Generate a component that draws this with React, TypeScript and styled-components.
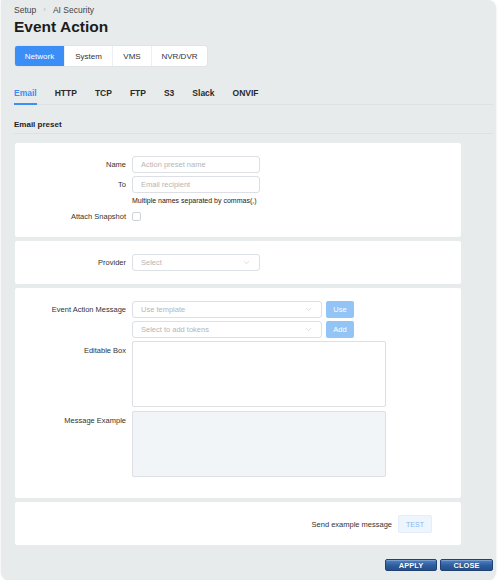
import styled, { createGlobalStyle } from "styled-components";
import { ChevronDown } from "lucide-react";

const GlobalStyle = createGlobalStyle`
  html, body {
    margin: 0;
    padding: 0;
    background: #ffffff;
    font-family: "Liberation Sans", Arial, sans-serif;
  }
`;

const Panel = styled.div`
  width: 495px;
  height: 580px;
  margin-left: 1px;
  background: #e8ebeb;
  border-radius: 0 8px 9px 9px;
  box-shadow: 0 1px 2px rgba(0, 0, 0, 0.12);
  display: flex;
  flex-direction: column;
  padding: 5px 3px 0 13px;
  box-sizing: border-box;
`;

const Breadcrumb = styled.div`
  display: flex;
  align-items: center;
  gap: 7px;
  font-size: 8.5px;
  line-height: 10px;
  color: #444;
`;

const Sep = styled.span`
  color: #b5b9bc;
  font-size: 8px;
`;

const Title = styled.h1`
  margin: 2px 0 0;
  font-size: 15.5px;
  line-height: 19px;
  font-weight: bold;
  color: #1c1c1c;
`;

const Segmented = styled.div`
  display: flex;
  align-self: flex-start;
  margin-top: 9px;
  height: 22px;
  background: #fff;
  border: 1px solid #e0e4e6;
  border-radius: 3px;
  box-sizing: border-box;
  overflow: hidden;
`;

const Segment = styled.div<{ $active?: boolean; $w: number }>`
  width: ${(p) => p.$w}px;
  display: flex;
  align-items: center;
  justify-content: center;
  font-size: 8px;
  color: ${(p) => (p.$active ? "#fff" : "#333")};
  background: ${(p) => (p.$active ? "#3b8ef5" : "transparent")};
  border-right: 1px solid #eceff1;
  &:last-child {
    border-right: none;
  }
`;

const SubTabs = styled.div`
  display: flex;
  gap: 18px;
  margin-top: 16px;
  border-bottom: 1px solid #dde1e2;
`;

const SubTab = styled.div<{ $active?: boolean }>`
  font-size: 8.5px;
  font-weight: bold;
  line-height: 10px;
  padding: 5px 0 5px;
  color: ${(p) => (p.$active ? "#3b8ef5" : "#2a2a2a")};
  border-bottom: 2px solid ${(p) => (p.$active ? "#3b8ef5" : "transparent")};
  margin-bottom: -1px;
`;

const SectionTitle = styled.div`
  font-size: 8px;
  font-weight: bold;
  color: #1e1e1e;
  padding: 15px 0 4px;
  border-bottom: 1px solid #dde1e2;
`;

const Cards = styled.div`
  display: flex;
  flex-direction: column;
  gap: 4px;
  margin: 9px 32px 0 1px;
`;

const Card = styled.div<{ $pt: number; $pb: number }>`
  background: #fff;
  border-radius: 2px;
  padding: ${(p) => p.$pt}px 0 ${(p) => p.$pb}px;
  display: flex;
  flex-direction: column;
  gap: 3px;
`;

const Row = styled.div<{ $top?: boolean }>`
  display: flex;
  align-items: ${(p) => (p.$top ? "flex-start" : "center")};
  gap: 6px;
`;

const Label = styled.div<{ $top?: boolean }>`
  width: 111px;
  flex-shrink: 0;
  text-align: right;
  font-size: 7.5px;
  color: #333;
  padding-top: ${(p) => (p.$top ? "5px" : "0")};
`;

const Input = styled.div<{ $w: number }>`
  width: ${(p) => p.$w}px;
  height: 17px;
  box-sizing: border-box;
  border: 1px solid #dcdfe3;
  border-radius: 3px;
  display: flex;
  align-items: center;
  justify-content: space-between;
  padding: 0 8px 0 8px;
  font-size: 7.5px;
  color: #b3b6ba;
`;

const Hint = styled.div`
  margin-left: 117px;
  font-size: 7px;
  color: #222;
  line-height: 9px;
`;

const Checkbox = styled.div`
  width: 9px;
  height: 9px;
  box-sizing: border-box;
  border: 1px solid #cfd3d6;
  border-radius: 2px;
`;

const SmallButton = styled.div`
  width: 28px;
  height: 17px;
  border-radius: 2px;
  background: #92c4f6;
  color: #fff;
  font-size: 7.5px;
  display: flex;
  align-items: center;
  justify-content: center;
  margin-left: 4px;
`;

const TextBox = styled.div<{ $filled?: boolean }>`
  width: 254px;
  height: 66px;
  box-sizing: border-box;
  border: 1px solid #dcdfe3;
  border-radius: 2px;
  background: ${(p) => (p.$filled ? "#f2f5f7" : "#fff")};
`;

const Field = styled.div`
  display: flex;
  align-items: center;
`;

const TestRow = styled.div`
  display: flex;
  justify-content: flex-end;
  align-items: center;
  gap: 6px;
  padding-right: 29px;
  font-size: 7.5px;
  color: #333;
`;

const TestButton = styled.div`
  width: 34px;
  height: 18px;
  border-radius: 2px;
  background: #eef5fd;
  border: 1px solid #e3eefa;
  box-sizing: border-box;
  color: #86b8f0;
  font-size: 7px;
  display: flex;
  align-items: center;
  justify-content: center;
`;

const Footer = styled.div`
  display: flex;
  justify-content: flex-end;
  gap: 3px;
  margin-top: auto;
  margin-bottom: 9px;
`;

const FooterButton = styled.div<{ $w: number }>`
  width: ${(p) => p.$w}px;
  height: 12px;
  box-sizing: border-box;
  border: 1px solid #1f4275;
  border-radius: 2px;
  background: linear-gradient(#4f82c6, #2d5d9e 55%, #274f88);
  box-shadow: inset 0 1px 0 rgba(255, 255, 255, 0.25);
  color: #fff;
  font-size: 7.5px;
  font-weight: bold;
  display: flex;
  align-items: center;
  justify-content: center;
  text-shadow: 0 0 1px rgba(0, 0, 0, 0.4);
`;

const segments = [
  { name: "Network", w: 49 },
  { name: "System", w: 47 },
  { name: "VMS", w: 38 },
  { name: "NVR/DVR", w: 55 },
];

const subTabs = ["Email", "HTTP", "TCP", "FTP", "S3", "Slack", "ONVIF"];

function Chevron() {
  return <ChevronDown size={9} color="#c2c5c8" strokeWidth={1.5} />;
}

export default function App() {
  return (
    <>
      <GlobalStyle />
      <Panel>
        <Breadcrumb>
          <span>Setup</span>
          <Sep>›</Sep>
          <span>AI Security</span>
        </Breadcrumb>
        <Title>Event Action</Title>
        <Segmented>
          {segments.map((s, i) => (
            <Segment key={s.name} $w={s.w} $active={i === 0}>
              {s.name}
            </Segment>
          ))}
        </Segmented>
        <SubTabs>
          {subTabs.map((t, i) => (
            <SubTab key={t} $active={i === 0}>
              {t}
            </SubTab>
          ))}
        </SubTabs>
        <SectionTitle>Email preset</SectionTitle>
        <Cards>
          <Card $pt={13} $pb={16}>
            <Row>
              <Label>Name</Label>
              <Input $w={128}>Action preset name</Input>
            </Row>
            <Row>
              <Label>To</Label>
              <Input $w={128}>Email recipient</Input>
            </Row>
            <Hint>Multiple names separated by commas(,)</Hint>
            <Row style={{ marginTop: 4 }}>
              <Label>Attach Snapshot</Label>
              <Checkbox />
            </Row>
          </Card>
          <Card $pt={13} $pb={13}>
            <Row>
              <Label>Provider</Label>
              <Input $w={128}>
                Select
                <Chevron />
              </Input>
            </Row>
          </Card>
          <Card $pt={13} $pb={21}>
            <Row>
              <Label>Event Action Message</Label>
              <Field>
                <Input $w={190}>
                  Use template
                  <Chevron />
                </Input>
                <SmallButton>Use</SmallButton>
              </Field>
            </Row>
            <Row>
              <Label />
              <Field>
                <Input $w={190}>
                  Select to add tokens
                  <Chevron />
                </Input>
                <SmallButton>Add</SmallButton>
              </Field>
            </Row>
            <Row $top>
              <Label $top>Editable Box</Label>
              <TextBox />
            </Row>
            <Row $top style={{ marginTop: 1 }}>
              <Label $top>Message Example</Label>
              <TextBox $filled />
            </Row>
          </Card>
          <Card $pt={13} $pb={12}>
            <TestRow>
              Send example message
              <TestButton>TEST</TestButton>
            </TestRow>
          </Card>
        </Cards>
        <Footer>
          <FooterButton $w={52}>APPLY</FooterButton>
          <FooterButton $w={53}>CLOSE</FooterButton>
        </Footer>
      </Panel>
    </>
  );
}
